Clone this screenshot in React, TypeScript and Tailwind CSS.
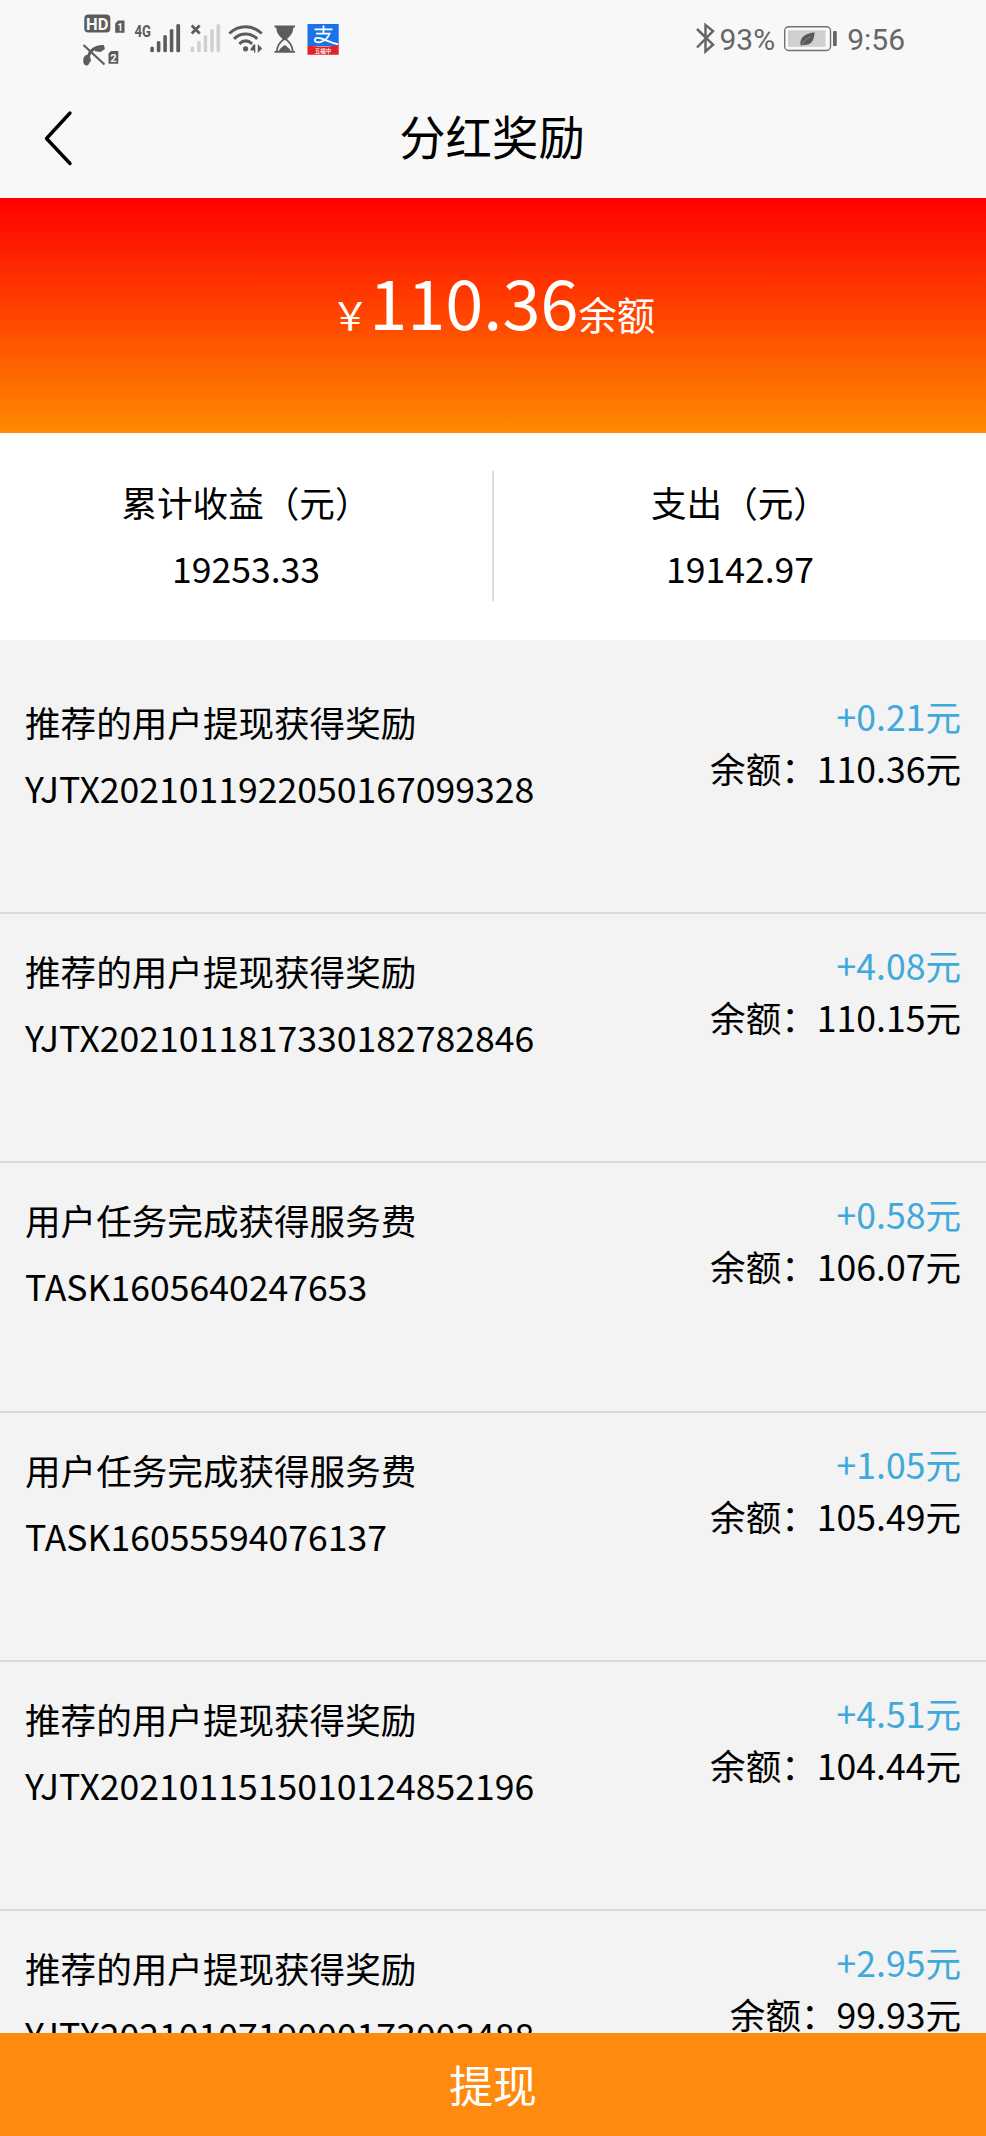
import React from "react";

type Entry = { title: string; code: string; amount: string; balance: string };

const entries: Entry[] = [
  { title: "推荐的用户提现获得奖励", code: "YJTX2021011922050167099328", amount: "+0.21元", balance: "110.36元" },
  { title: "推荐的用户提现获得奖励", code: "YJTX2021011817330182782846", amount: "+4.08元", balance: "110.15元" },
  { title: "用户任务完成获得服务费", code: "TASK1605640247653", amount: "+0.58元", balance: "106.07元" },
  { title: "用户任务完成获得服务费", code: "TASK16055594076137", amount: "+1.05元", balance: "105.49元" },
  { title: "推荐的用户提现获得奖励", code: "YJTX2021011515010124852196", amount: "+4.51元", balance: "104.44元" },
  { title: "推荐的用户提现获得奖励", code: "YJTX2021010719000173003488", amount: "+2.95元", balance: "99.93元" },
];

function CallIcons() {
  return (
    <svg className="ml-[82px] h-[80px] w-[46px] shrink-0" viewBox="82 0 46 80" fill="#5c5c5c">
      <rect x="84.3" y="14.6" width="26" height="17.8" rx="4" />
      <text x="97.3" y="29.6" textAnchor="middle" fontFamily="Roboto, sans-serif" fontWeight="700" fontSize="16.5" fill="#f8f8f8">HD</text>
      <path d="M118 20.5h6.5v12.3h-9.3v-9.3z" />
      <text x="120" y="30.6" textAnchor="middle" fontFamily="Roboto, sans-serif" fontWeight="700" fontSize="10" fill="#f8f8f8">1</text>
      <path d="M83.4 62.5c-.6-3.6.4-6.5 2.6-7.6l3.6.2 1.4 5.4-3 4.8c-2.4.6-4.2-.4-4.6-2.8zM93.500 48.500c2.600-2.800 6.600-4.300 10.500-3.300l.9 3.900-4.500 3-5.200-.8z" />
      <path d="M88 59.500c.4-5.800 3.800-10.500 9.500-12.200" fill="none" stroke="#5c5c5c" strokeWidth="3" />
      <path d="M83.500 45l21 19.500" stroke="#5c5c5c" strokeWidth="2.200" />
      <path d="M111 51h7.300v12.800H108.500v-10.300z" />
      <text x="113.500" y="61.700" textAnchor="middle" fontFamily="Roboto, sans-serif" fontWeight="700" fontSize="11" fill="#f8f8f8">2</text>
    </svg>
  );
}

function SignalIcon() {
  return (
    <svg className="ml-1.5 h-[80px] w-[48px] shrink-0" viewBox="134 0 48 80" fill="#5c5c5c">
      <text x="134.500" y="36.500" textLength="16.500" lengthAdjust="spacingAndGlyphs" fontFamily="Roboto, sans-serif" fontWeight="700" fontSize="17">4G</text>
      <rect x="150.300" y="46.500" width="3.600" height="5.800" rx="1.600" />
      <rect x="156.800" y="41" width="3.600" height="11.300" rx="1.600" />
      <rect x="163.300" y="35" width="3.600" height="17.300" rx="1.600" />
      <rect x="169.800" y="29" width="3.600" height="23.300" rx="1.600" />
      <rect x="176.300" y="24" width="3.800" height="28.300" rx="1.600" />
    </svg>
  );
}

function NoSignalIcon() {
  return (
    <svg className="ml-2 h-[80px] w-[32px] shrink-0" viewBox="190 0 32 80" fill="#d0d0d0">
      <path d="M191.700 25.500l8 8m0-8l-8 8" stroke="#5c5c5c" strokeWidth="2.700" />
      <rect x="190.700" y="46.500" width="3.500" height="5.800" rx="1.600" />
      <rect x="197.200" y="41" width="3.500" height="11.300" rx="1.600" />
      <rect x="203.700" y="35" width="3.500" height="17.300" rx="1.600" />
      <rect x="210.200" y="29" width="3.500" height="23.300" rx="1.600" />
      <rect x="216.500" y="24" width="3.600" height="28.300" rx="1.600" />
    </svg>
  );
}

function WifiIcon() {
  return (
    <svg className="ml-1.5 h-[80px] w-[36px] shrink-0" viewBox="228 0 36 80" fill="none" stroke="#5c5c5c" strokeWidth="3">
      <path d="M229.300 33.500c9.500-9 23-9 32.400 0M234 38.800c7-6.300 16.200-6.300 23.200 0M239.300 43.800c4-3.600 8.800-3.600 12.800 0" />
      <circle cx="245.600" cy="48.800" r="2.600" fill="#5c5c5c" stroke="none" />
      <path d="M255.300 44.500v8.300h-1.300v-2.300h-3.500v-1.500l3-4.500zM257.800 44l4.400 4.600-4.400 4.400z" fill="#5c5c5c" stroke="none" />
    </svg>
  );
}

function HourglassIcon() {
  return (
    <svg className="ml-[10px] h-[80px] w-[23px] shrink-0" viewBox="274 0 23 80">
      <path d="M274.500 26.500h20.500M274.500 51.900h20.500" stroke="#5c5c5c" strokeWidth="1.800" />
      <path d="M276.300 27h17c0 6-2.600 8.700-6.300 12h-4.400c-3.700-3.300-6.300-6-6.300-12z" fill="#5c5c5c" />
      <path d="M277 51.500c0-6 2.800-8.600 6.300-12h3c3.500 3.400 6.300 6 6.300 12" fill="none" stroke="#5c5c5c" strokeWidth="1.700" />
      <path d="M278.800 51.500c1-3.500 3.200-4 6-6.500 2.800 2.500 5 3 6 6.500z" fill="#5c5c5c" />
    </svg>
  );
}

function PayIcon() {
  return (
    <svg className="ml-[10px] h-[80px] w-[32px] shrink-0" viewBox="307 0 32 80">
      <path d="M307.500 24h31.200v22H307.500z" fill="#1a73e8" />
      <path d="M307.500 45.500c10 1.500 22 1.500 31.200-.5v9.800H307.500z" fill="#e0222a" />
      <path d="M314.500 29.300h18M323.500 25.500v8M316 33.700h13.500c-1.500 4-5.500 7.600-9.500 8.400-3.600.7-5.500-.7-5.300-2.300.3-2 3.400-2.500 7-1.100 5 1.900 9.500 4.300 16.500 5.600" fill="none" stroke="#fff" strokeWidth="1.800" />
      <text x="323" y="53" textAnchor="middle" fontFamily="'Noto Sans CJK SC', sans-serif" fontWeight="500" fontSize="5.500" fill="#fff">五福中</text>
    </svg>
  );
}

function BluetoothIcon() {
  return (
    <svg className="h-[80px] w-[20px] shrink-0" viewBox="696 0 20 80" fill="none" stroke="#666" strokeWidth="2.500">
      <path d="M697 29l16 15.700-7.500 6.800V25l7.500 6L697 47.500" />
    </svg>
  );
}

function BatteryIcon() {
  return (
    <svg className="ml-2 h-[80px] w-[55px] shrink-0" viewBox="784 0 55 80">
      <rect x="785.700" y="26.700" width="45.800" height="23.800" rx="4" fill="#fafafa" stroke="#707070" strokeWidth="1.400" />
      <rect x="789" y="30.300" width="37.500" height="16.600" fill="#d0d0d0" />
      <path d="M801.500 45.500c-.8-7.500 3-11.300 14-13.200-.2 8.500-3.500 13-10.800 12.700l-1.700.6z" fill="#585858" />
      <path d="M802 46c2.500-4.600 5.500-7.300 9.500-9.500" fill="none" stroke="#9a9a9a" strokeWidth=".8" />
      <rect x="834" y="31" width="3.800" height="15" rx="1" fill="#666" />
    </svg>
  );
}

export default function App() {
  return (
    <div className="flex h-[2136px] w-[986px] flex-col overflow-hidden bg-[#f2f3f2] font-['Noto_Sans_CJK_SC',sans-serif] text-[35.6px] text-black">
      <header className="flex h-[198px] shrink-0 flex-col bg-[#f8f8f8]">
        <div className="flex h-[80px] items-center justify-between pr-[81px] font-[Roboto,sans-serif] text-[30px] leading-none text-[#666]">
          <div className="flex items-center">
            <CallIcons />
            <SignalIcon />
            <NoSignalIcon />
            <WifiIcon />
            <HourglassIcon />
            <PayIcon />
          </div>
          <div className="flex items-center">
            <BluetoothIcon />
            <span className="ml-[3px] pb-px">93%</span>
            <BatteryIcon />
            <span className="ml-[9px] pb-px">9:56</span>
          </div>
        </div>
        <div className="grid h-[118px] grid-cols-[1fr_auto_1fr] items-center pb-[2px]">
          <svg className="ml-[43px] h-[58px] w-[30px]" viewBox="0 0 30 58" fill="none" stroke="#000" strokeWidth="3.400" strokeLinecap="round" strokeLinejoin="round">
            <path d="M27 4L3.500 29.500L27 54.500" />
          </svg>
          <h1 className="pr-[2px] pb-[6px] text-[46.400px] leading-[60px]">分红奖励</h1>
        </div>
      </header>

      <section className="flex h-[235px] shrink-0 items-start justify-center bg-[linear-gradient(to_bottom,#ff0000,#ff8a00)] pt-[53px] text-[38.300px] leading-[100px] text-white">
        <div className="flex items-baseline">
          <span>￥</span>
          <span className="text-[68.500px]">110.36</span>
          <span>余额</span>
        </div>
      </section>

      <section className="flex h-[207px] shrink-0 items-center bg-white text-center leading-[66px]">
        <div className="flex-1 pb-[3px]">
          <p>累计收益（元）</p>
          <p>19253.33</p>
        </div>
        <div className="mb-[2px] h-[130px] w-[2px] bg-[#dcdcdc]" />
        <div className="flex-1 pb-[3px]">
          <p>支出（元）</p>
          <p>19142.97</p>
        </div>
      </section>

      <main className="min-h-0 flex-1 overflow-hidden pt-[25px]">
        {entries.map((entry) => (
          <article key={entry.code} className="flex h-[249.200px] justify-between border-b-2 border-[#d9dadb] px-[25px] pt-[24px]">
            <div className="leading-[66px]">
              <p>{entry.title}</p>
              <p>{entry.code}</p>
            </div>
            <div className="pt-px text-right leading-[52px]">
              <p className="text-[#41a8dc]">{entry.amount}</p>
              <p>余额：{entry.balance}</p>
            </div>
          </article>
        ))}
      </main>

      <button type="button" className="flex h-[103px] shrink-0 items-center justify-center bg-[#ff8a10] text-[43.800px] leading-none text-white">
        提现
      </button>
    </div>
  );
}
